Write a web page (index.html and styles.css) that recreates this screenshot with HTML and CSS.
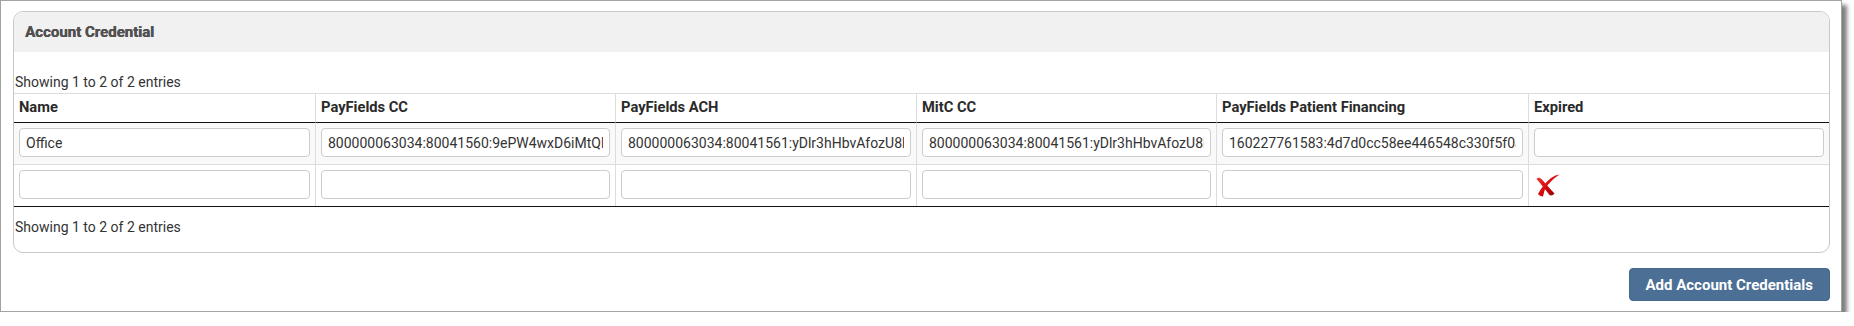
FILE: index.html
```html
<!DOCTYPE html>
<html lang="en">
<head>
  <meta charset="UTF-8">
  <title>Account Credential</title>
  <link rel="stylesheet" href="styles.css">
</head>
<body>
  <div class="frame">
    <div class="panel">
      <div class="panel-heading">Account Credential</div>
      <div class="panel-body">
        <div class="info info-top">Showing 1 to 2 of 2 entries</div>
        <table class="grid">
          <thead>
            <tr>
              <th class="col-name">Name</th>
              <th class="col-cc">PayFields CC</th>
              <th class="col-ach">PayFields ACH</th>
              <th class="col-mitc">MitC CC</th>
              <th class="col-ppf">PayFields Patient Financing</th>
              <th>Expired</th>
            </tr>
          </thead>
          <tbody>
            <tr class="odd">
              <td><input type="text" value="Office"></td>
              <td><input type="text" value="800000063034:80041560:9ePW4wxD6iMtQlx"></td>
              <td><input type="text" value="800000063034:80041561:yDlr3hHbvAfozU8lx"></td>
              <td><input type="text" value="800000063034:80041561:yDlr3hHbvAfozU8lx"></td>
              <td><input type="text" value="160227761583:4d7d0cc58ee446548c330f5f0a1"></td>
              <td><input type="text" value=""></td>
            </tr>
            <tr>
              <td><input type="text" value=""></td>
              <td><input type="text" value=""></td>
              <td><input type="text" value=""></td>
              <td><input type="text" value=""></td>
              <td><input type="text" value=""></td>
              <td>
                <!-- delete row -->
                <svg class="del" width="24" height="23" viewBox="0 0 24 23">
                  <defs>
                    <linearGradient id="red" x1="0" y1="0" x2="1" y2="1">
                      <stop offset="0" stop-color="#f03a3a"/>
                      <stop offset="0.5" stop-color="#d60a0a"/>
                      <stop offset="1" stop-color="#980000"/>
                    </linearGradient>
                  </defs>
                  <path d="M0.5,5 C2,3 4,3.5 6,5.5 C10,10 14,15 18.5,19.5 C17,21.5 15,22 13.5,21 C9,15 5,10 0.5,5 Z" fill="url(#red)"/>
                  <path d="M23.5,0.5 C18,4 12,10 9,15 C8,18 7.5,20.5 7,22.5 C5,22.5 3,21.5 2,20 C5,14 10,8 15,4 C18,2 21,0.8 23.5,0.5 Z" fill="url(#red)"/>
                </svg>
              </td>
            </tr>
          </tbody>
        </table>
        <div class="info info-bottom">Showing 1 to 2 of 2 entries</div>
      </div>
    </div>
    <div class="actions">
      <button class="btn">Add Account Credentials</button>
    </div>
  </div>
</body>
</html>
```

FILE: styles.css
```css
body {
  margin: 0;
  background: #fff;
  font-family: Roboto, "Liberation Sans", Arial, sans-serif;
  color: #333;
}
.frame {
  width: 1817px;
  height: 290px;
  padding: 10px 11px 10px 12px;
  border: 1px solid #a3a3a3;
  background: #fff;
  box-shadow: 5px 5px 4px rgba(0, 0, 0, 0.5);
}
.panel {
  border: 1px solid #c8c8c8;
  border-radius: 10px;
  overflow: hidden;
}
.panel-heading {
  height: 40px;
  line-height: 40px;
  padding-left: 11px;
  background: #f1f1f1;
  font-size: 15px;
  font-weight: 700;
  color: #505050;
  text-shadow: 0.4px 0 0 #505050;
}
.panel-body {
  padding: 20px 0 14px;
}
.info {
  font-size: 14px;
  line-height: 21px;
  padding-left: 1px;
}
.info-bottom {
  margin-top: 10px;
}
.grid {
  width: 100%;
  table-layout: fixed;
  border-collapse: separate;
  border-spacing: 0;
  border-top: 1px solid #ddd;
  border-bottom: 1px solid #111;
}
.grid th,
.grid td {
  box-sizing: border-box;
  border-left: 1px solid #ddd;
}
.grid th:first-child,
.grid td:first-child {
  border-left: none;
}
.grid th {
  padding: 4px 5px 6px;
  line-height: 18px;
  font-size: 14.7px;
  font-weight: 700;
  text-align: left;
  color: #2a2a2a;
  border-bottom: 1px solid #111;
}
.col-name { width: 301px; }
.col-cc { width: 300px; }
.col-ach { width: 301px; }
.col-mitc { width: 300px; }
.col-ppf { width: 312px; }
.grid td {
  padding: 5px 5px 7px;
  vertical-align: top;
}
.grid tr.odd td {
  background: #f9f9f9;
  border-bottom: 1px solid #ddd;
}
.grid input {
  display: block;
  box-sizing: border-box;
  width: 100%;
  height: 29px;
  margin: 0;
  padding: 0 6px;
  border: 1px solid #ccc;
  border-radius: 4px;
  background: #fff;
  font-family: Roboto, "Liberation Sans", Arial, sans-serif;
  font-size: 14px;
  color: #333;
}
.del {
  display: block;
  margin: 4px 0 0 2px;
}
.actions {
  display: flex;
  justify-content: flex-end;
  margin-top: 15px;
}
.btn {
  height: 33px;
  padding: 0 16px;
  border: 1px solid #45688d;
  border-radius: 4px;
  background: #4b6f95;
  color: #fff;
  font-family: Roboto, "Liberation Sans", Arial, sans-serif;
  font-size: 15px;
  font-weight: 700;
}
```
